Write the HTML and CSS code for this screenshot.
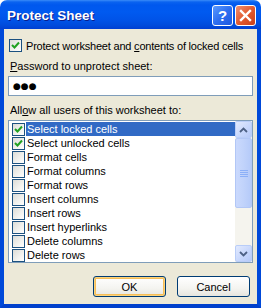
FILE: index.html
```html
<!DOCTYPE html>
<html>
<head>
<meta charset="utf-8">
<link rel="stylesheet" href="styles.css">
</head>
<body>
<div class="window">
  <div class="titlebar">
    <span class="title">Protect Sheet</span>
    <div class="tbtns">
      <span class="tbtn help">?</span>
      <span class="tbtn close"><svg width="13" height="13" viewBox="0 0 13 13"><path d="M2 2 L11 11 M11 2 L2 11" stroke="#fff" stroke-width="2.4" stroke-linecap="square"/></svg></span>
    </div>
  </div>
  <div class="body">
    <div class="chk-row">
      <span class="cb"><svg width="11" height="11" viewBox="0 0 11 11"><polyline points="2,5 4.5,7.5 9,2.5" fill="none" stroke="#21A121" stroke-width="2"/></svg></span>
      <span class="chk-text">Protect worksheet and <u>c</u>ontents of locked cells</span>
    </div>
    <div class="lbl lbl-pw"><u>P</u>assword to unprotect sheet:</div>
    <div class="input">●●●</div>
    <div class="lbl lbl-allow">All<u>o</u>w all users of this worksheet to:</div>
    <div class="listbox">
      <div class="items">
        <div class="item"><span class="cb"><svg width="11" height="11" viewBox="0 0 11 11"><polyline points="2,5 4.5,7.5 9,2.5" fill="none" stroke="#21A121" stroke-width="2"/></svg></span><span class="txt sel">Select locked cells</span></div>
        <div class="item"><span class="cb"><svg width="11" height="11" viewBox="0 0 11 11"><polyline points="2,5 4.5,7.5 9,2.5" fill="none" stroke="#21A121" stroke-width="2"/></svg></span><span class="txt">Select unlocked cells</span></div>
        <div class="item"><span class="cb"></span><span class="txt">Format cells</span></div>
        <div class="item"><span class="cb"></span><span class="txt">Format columns</span></div>
        <div class="item"><span class="cb"></span><span class="txt">Format rows</span></div>
        <div class="item"><span class="cb"></span><span class="txt">Insert columns</span></div>
        <div class="item"><span class="cb"></span><span class="txt">Insert rows</span></div>
        <div class="item"><span class="cb"></span><span class="txt">Insert hyperlinks</span></div>
        <div class="item"><span class="cb"></span><span class="txt">Delete columns</span></div>
        <div class="item"><span class="cb"></span><span class="txt">Delete rows</span></div>
      </div>
      <div class="scrollbar">
        <div class="sb-btn"><svg width="9" height="6" viewBox="0 0 9 6"><polyline points="1,5 4.5,1.5 8,5" fill="none" stroke="#4D6185" stroke-width="1.8"/></svg></div>
        <div class="sb-track">
          <div class="thumb"><svg width="8" height="7" viewBox="0 0 8 7"><path d="M0 0.5H8M0 2.5H8M0 4.5H8M0 6.5H8" stroke="#8CB0F8" stroke-width="1"/></svg></div>
        </div>
        <div class="sb-btn"><svg width="9" height="6" viewBox="0 0 9 6"><polyline points="1,1 4.5,4.5 8,1" fill="none" stroke="#4D6185" stroke-width="1.8"/></svg></div>
      </div>
    </div>
    <div class="buttons">
      <button class="btn ok">OK</button>
      <button class="btn">Cancel</button>
    </div>
  </div>
</div>
</body>
</html>
```
FILE: styles.css
```css
html, body {
  margin: 0;
  padding: 0;
  background: #ffffff;
}
.window {
  width: 261px;
  height: 308px;
  display: flex;
  flex-direction: column;
  font-family: "Liberation Sans", Arial, sans-serif;
  font-size: 11px;
  color: #000;
  white-space: nowrap;
}
.titlebar {
  height: 29px;
  flex: none;
  display: flex;
  align-items: center;
  justify-content: space-between;
  padding: 0 5px 0 7px;
  border-radius: 7px 7px 0 0;
  background: linear-gradient(to bottom, #3A8CF8 0px, #0A63F0 2px, #0058EE 5px, #005AF0 12px, #0053E8 20px, #004CDC 25px, #003FD2 29px);
}
.title {
  color: #fff;
  font-weight: bold;
  font-size: 13.5px;
  text-shadow: 1px 1px 0 #0A1E8C;
  margin-top: 1px;
}
.tbtns {
  display: flex;
  gap: 2px;
  margin-top: 2px;
}
.tbtn {
  width: 19px;
  height: 19px;
  border: 1px solid #fff;
  border-radius: 3px;
  display: flex;
  align-items: center;
  justify-content: center;
  color: #fff;
  font-weight: bold;
  font-size: 15px;
}
.help {
  background: linear-gradient(135deg, #5A9AFF 0%, #2E6FF0 50%, #1E58E0 100%);
}
.close {
  background: linear-gradient(135deg, #F09070 0%, #E25A30 50%, #C8401A 100%);
}
.body {
  flex: 1;
  background: #ECE9D8;
  border-left: 4px solid #0049D9;
  border-right: 4px solid #0049D9;
  border-bottom: 4px solid #0040CC;
  padding: 10px 4px 0 4px;
  display: flex;
  flex-direction: column;
}
.chk-row {
  display: flex;
  align-items: center;
  gap: 4px;
  height: 13px;
  padding-left: 1px;
}
.chk-text {
  letter-spacing: -0.2px;
}
.cb {
  width: 11px;
  height: 11px;
  flex: none;
  border: 1px solid #1C5180;
  background: linear-gradient(135deg, #DCDCD7 0%, #F2F2EF 60%, #FFFFFF 100%);
  display: flex;
  align-items: center;
  justify-content: center;
}
.lbl {
  line-height: 13px;
  padding-left: 2px;
}
.lbl-pw {
  margin-top: 8px;
}
.lbl-allow {
  margin-top: 8px;
}
.input {
  margin-top: 3px;
  height: 18px;
  border: 1px solid #7F9DB9;
  background: #fff;
  font-family: "DejaVu Sans", sans-serif;
  font-size: 9px;
  line-height: 18px;
  padding-left: 4px;
}
.listbox {
  margin-top: 3px;
  height: 141px;
  border: 1px solid #7F9DB9;
  background: #fff;
  display: flex;
}
.items {
  flex: 1;
  padding-top: 1px;
}
.item {
  height: 14px;
  display: flex;
  align-items: center;
  padding-left: 3px;
}
.txt {
  margin-left: 1px;
  padding: 0 1px;
  height: 14px;
  line-height: 14px;
  flex: 1;
}
.txt.sel {
  background: #316AC5;
  color: #fff;
}
.scrollbar {
  width: 17px;
  flex: none;
  display: flex;
  flex-direction: column;
  background: #F5F4EE;
}
.sb-btn {
  height: 15px;
  flex: none;
  border: 1px solid #B9CDF8;
  border-radius: 2px;
  background: linear-gradient(135deg, #E2EAFE 0%, #C6D6FC 60%, #B5C9F8 100%);
  display: flex;
  align-items: center;
  justify-content: center;
}
.sb-track {
  flex: 1;
  display: flex;
  flex-direction: column;
}
.thumb {
  height: 68px;
  border: 1px solid #B2C7F6;
  border-radius: 2px;
  background: linear-gradient(to right, #CAD9FD 0%, #C1D3FB 50%, #B5CAF9 100%);
  display: flex;
  align-items: center;
  justify-content: center;
}
.buttons {
  margin-top: 13px;
  display: flex;
  justify-content: flex-end;
  gap: 11px;
  padding-right: 3px;
}
.btn {
  width: 73px;
  height: 21px;
  border: 1px solid #003C74;
  border-radius: 3px;
  background: linear-gradient(to bottom, #FFFFFF 0%, #F4F4F0 60%, #E6E5DE 100%);
  font-family: "Liberation Sans", Arial, sans-serif;
  font-size: 11px;
  color: #000;
  padding: 0;
}
.btn.ok {
  box-shadow: inset 0 0 0 1px #FBD27C, inset 0 0 0 2px #F6BE58;
}
```
